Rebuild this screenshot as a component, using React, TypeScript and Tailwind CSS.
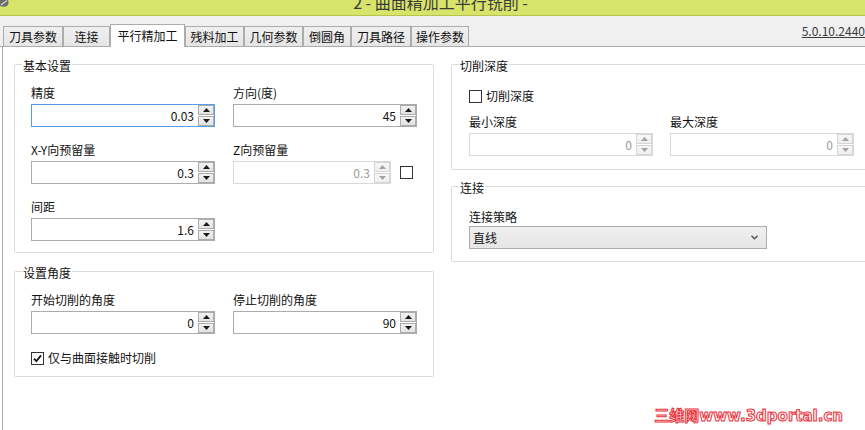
import React from "react";

function Arrow({ up, disabled }: { up?: boolean; disabled?: boolean }) {
  return (
    <svg width="7" height="4" viewBox="0 0 7 4" className="block">
      <polygon
        points={up ? "3.5,0 7,4 0,4" : "0,0 7,0 3.5,4"}
        fill={disabled ? "#a3a3a3" : "#1a1a1a"}
      />
    </svg>
  );
}

function Spin({ disabled }: { disabled?: boolean }) {
  const btn = disabled
    ? "h-[10px] border border-[#d5d5d5] bg-linear-to-b from-[#f7f7f7] to-[#efefef] flex items-center justify-center"
    : "h-[10px] border border-[#acacac] bg-linear-to-b from-[#f2f2f2] to-[#e3e3e3] flex items-center justify-center";
  return (
    <div className="w-[16px] flex flex-col gap-[1px] shrink-0">
      <div className={btn}>
        <Arrow up disabled={disabled} />
      </div>
      <div className={btn}>
        <Arrow disabled={disabled} />
      </div>
    </div>
  );
}

function NumInput({
  value,
  width,
  focused,
  disabled,
}: {
  value: string;
  width: string;
  focused?: boolean;
  disabled?: boolean;
}) {
  const border = focused
    ? "border-[#569de5]"
    : disabled
    ? "border-[#d9d9d9]"
    : "border-[#acacac]";
  return (
    <div className={`${width} h-[23px] border ${border} bg-white flex`}>
      <div
        className={`flex-1 text-right pr-[4px] leading-[21px] text-[12px] ${
          disabled ? "text-[#9a9a9a]" : "text-[#111111]"
        }`}
      >
        {value}
      </div>
      <Spin disabled={disabled} />
    </div>
  );
}

function CheckBox({ checked }: { checked?: boolean }) {
  return (
    <div className="w-[13px] h-[13px] border border-[#333333] bg-white flex items-center justify-center shrink-0">
      {checked && (
        <svg width="9" height="9" viewBox="0 0 9 9" className="block">
          <path d="M1 4.6 L3.4 7.2 L8 1.4" stroke="#111111" strokeWidth="1.8" fill="none" />
        </svg>
      )}
    </div>
  );
}

function Label({ children }: { children: React.ReactNode }) {
  return <div className="h-[18px] leading-[18px] text-[12px] text-[#111111] whitespace-nowrap">{children}</div>;
}

function GroupTitle({ children }: { children: React.ReactNode }) {
  return (
    <div className="h-0">
      <span className="inline-block -translate-y-1/2 ml-[7px] px-[1px] bg-white leading-[16px] text-[12px] text-[#111111]">
        {children}
      </span>
    </div>
  );
}

function Tab({ label, w, active }: { label: string; w: string; active?: boolean }) {
  if (active) {
    return (
      <div
        className={`${w} h-[23px] -mb-px bg-white border-t border-l border-r border-[#acacac] flex justify-center pt-[3px] leading-[16px] text-[12px] text-[#111111] whitespace-nowrap shrink-0 relative z-10`}
      >
        {label}
      </div>
    );
  }
  return (
    <div
      className={`${w} h-[20px] bg-linear-to-b from-[#f0f0f0] to-[#e5e5e5] border-t border-l border-r border-[#acacac] flex items-center justify-center leading-[16px] text-[12px] text-[#111111] whitespace-nowrap shrink-0`}
    >
      {label}
    </div>
  );
}

export default function App() {
  return (
    <div className="w-[865px] h-[430px] overflow-hidden bg-white relative flex flex-col [font-family:'Noto_Sans_CJK_SC','Noto_Sans',sans-serif] text-[12px] text-[#111111]">
      {/* Title bar */}
      <div className="h-[16px] shrink-0 bg-[#d8e36a] border-b border-[#b8c24e] relative overflow-hidden flex justify-center">
        <svg width="10" height="8" viewBox="0 0 10 8" className="absolute left-0 top-0">
          <path d="M0 0 H8 Q9.5 3 7 6 Q4 7.5 0 6 Z" fill="#6b6b6b" />
          <path d="M1 5 L7 0.5" stroke="#d8d8d8" strokeWidth="1.2" />
        </svg>
        <div className="text-[16px] leading-[16px] -mt-[6px] text-[#3a3a3a] pl-[16px] whitespace-nowrap">
          2 - 曲面精加工平行铣削 -
        </div>
      </div>

      {/* Tab strip */}
      <div className="h-[31px] shrink-0 bg-[#f0f0f0] border-b border-[#acacac] flex items-end pl-[3px]">
        <Tab label="刀具参数" w="w-[60px]" />
        <Tab label="连接" w="w-[47px]" />
        <Tab label="平行精加工" w="w-[75px]" active />
        <Tab label="残料加工" w="w-[59px]" />
        <Tab label="几何参数" w="w-[59px]" />
        <Tab label="倒圆角" w="w-[48px]" />
        <Tab label="刀具路径" w="w-[60px]" />
        <Tab label="操作参数" w="w-[58px]" />
        <div className="ml-auto self-start mt-[7px] leading-[16px] text-[12px] text-[#3a3a3a] underline whitespace-nowrap pl-[10px]">
          5.0.10.2440
        </div>
      </div>

      {/* Content */}
      <div className="flex-1 ml-[2px] border-l border-[#acacac] flex pl-[11px] gap-[17px]">
        {/* Left column */}
        <div className="w-[420px] shrink-0 flex flex-col">
          <div className="mt-[17px] border border-[#dcdcdc] rounded-[2px]">
            <GroupTitle>基本设置</GroupTitle>
            <div className="pt-[19px] pb-[11px] pl-[16px] flex flex-col gap-[14px]">
              <div className="flex gap-[18px]">
                <div className="w-[184px]">
                  <Label>精度</Label>
                  <div className="mt-[2px]">
                    <NumInput value="0.03" width="w-[184px]" focused />
                  </div>
                </div>
                <div className="w-[184px]">
                  <Label>方向(度)</Label>
                  <div className="mt-[2px]">
                    <NumInput value="45" width="w-[184px]" />
                  </div>
                </div>
              </div>
              <div className="flex gap-[18px]">
                <div className="w-[184px]">
                  <Label>X-Y向预留量</Label>
                  <div className="mt-[2px]">
                    <NumInput value="0.3" width="w-[184px]" />
                  </div>
                </div>
                <div className="w-[190px]">
                  <Label>Z向预留量</Label>
                  <div className="mt-[2px] flex items-center">
                    <NumInput value="0.3" width="w-[158px]" disabled />
                    <div className="ml-[9px]">
                      <CheckBox />
                    </div>
                  </div>
                </div>
              </div>
              <div className="flex gap-[18px]">
                <div className="w-[184px]">
                  <Label>间距</Label>
                  <div className="mt-[2px]">
                    <NumInput value="1.6" width="w-[184px]" />
                  </div>
                </div>
              </div>
            </div>
          </div>

          <div className="mt-[18px] border border-[#dcdcdc] rounded-[2px]">
            <GroupTitle>设置角度</GroupTitle>
            <div className="pt-[19px] pb-[10px] pl-[16px] flex flex-col">
              <div className="flex gap-[18px]">
                <div className="w-[184px]">
                  <Label>开始切削的角度</Label>
                  <div className="mt-[2px]">
                    <NumInput value="0" width="w-[184px]" />
                  </div>
                </div>
                <div className="w-[184px]">
                  <Label>停止切削的角度</Label>
                  <div className="mt-[2px]">
                    <NumInput value="90" width="w-[184px]" />
                  </div>
                </div>
              </div>
              <div className="mt-[16px] h-[16px] flex items-center gap-[4px]">
                <CheckBox checked />
                <span className="leading-[16px] text-[12px]">仅与曲面接触时切削</span>
              </div>
            </div>
          </div>
        </div>

        {/* Right column */}
        <div className="w-[430px] shrink-0 flex flex-col">
          <div className="mt-[17px] border border-[#dcdcdc] rounded-[2px]">
            <GroupTitle>切削深度</GroupTitle>
            <div className="pt-[23px] pb-[13px] pl-[17px] flex flex-col">
              <div className="h-[16px] flex items-center gap-[4px]">
                <CheckBox />
                <span className="leading-[16px] text-[12px]">切削深度</span>
              </div>
              <div className="mt-[9px] flex gap-[17px]">
                <div className="w-[184px]">
                  <Label>最小深度</Label>
                  <div className="mt-[2px]">
                    <NumInput value="0" width="w-[184px]" disabled />
                  </div>
                </div>
                <div className="w-[184px]">
                  <Label>最大深度</Label>
                  <div className="mt-[2px]">
                    <NumInput value="0" width="w-[184px]" disabled />
                  </div>
                </div>
              </div>
            </div>
          </div>

          <div className="mt-[16px] border border-[#dcdcdc] rounded-[2px]">
            <GroupTitle>连接</GroupTitle>
            <div className="pt-[21px] pb-[12px] pl-[17px] flex flex-col">
              <Label>连接策略</Label>
              <div className="w-[298px] h-[23px] border border-[#acacac] bg-linear-to-b from-[#f0f0f0] to-[#e5e5e5] flex items-center pl-[3px] pr-[8px]">
                <span className="flex-1 leading-[16px] text-[12px]">直线</span>
                <svg width="7" height="5" viewBox="0 0 7 5" className="block">
                  <path d="M0.5 0.8 L3.5 3.8 L6.5 0.8" stroke="#555555" strokeWidth="1.4" fill="none" />
                </svg>
              </div>
            </div>
          </div>
        </div>
      </div>

      {/* Watermark */}
      <div className="absolute right-[22px] bottom-[6px] leading-[16px] text-[15px] font-bold [font-family:'DejaVu_Sans','Noto_Sans_CJK_SC',sans-serif] text-[#fff2f2] [-webkit-text-stroke:1px_#e8323c] whitespace-nowrap">
        三维网www.3dportal.cn
      </div>
    </div>
  );
}
